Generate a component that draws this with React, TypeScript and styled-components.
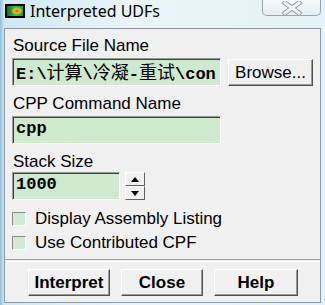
import React from "react";
import styled, { createGlobalStyle } from "styled-components";

const Global = createGlobalStyle`
  html, body { margin: 0; padding: 0; background: #e2f1f6; }
  body { font-family: "Liberation Sans", Arial, sans-serif; }
`;

const Window = styled.div`
  width: 325px;
  height: 305px;
  overflow: hidden;
  display: flex;
  flex-direction: column;
  background: linear-gradient(90deg, #8fbfd6 0px, #cfe8f2 4px, #e8f5f9 40%, #e4f3f7 100%);
`;

const TitleBar = styled.div`
  height: 28px;
  display: flex;
  align-items: flex-start;
  padding-left: 5px;
`;

const AppIcon = styled.svg`
  margin-top: 4px;
  flex: none;
`;

const Title = styled.div`
  margin-left: 5px;
  font-family: "Noto Sans", "Open Sans", sans-serif;
  font-size: 16px;
  line-height: 22px;
  color: #000;
`;

const CloseBox = styled.div`
  margin-left: auto;
  margin-right: 4px;
  width: 59px;
  height: 16px;
  box-sizing: border-box;
  border: 1px solid #95a5b2;
  border-top: none;
  border-radius: 0 0 5px 5px;
  background: linear-gradient(#f4fafc, #e3eef3);
  display: flex;
  align-items: center;
  justify-content: center;
`;

const Client = styled.div`
  margin-left: 4px;
  width: 317px;
  box-sizing: border-box;
  border: 1px solid #8c98a2;
  background: #f0f0f0;
  display: flex;
  flex-direction: column;
`;

const Form = styled.div`
  display: flex;
  flex-direction: column;
  padding: 7px 0 0 7px;
`;

const Label = styled.div<{ $mt?: number; $mb?: number }>`
  margin: ${(p) => p.$mt ?? 0}px 0 ${(p) => p.$mb ?? 3}px 1px;
  font-size: 17px;
  line-height: 19px;
  color: #000;
  white-space: nowrap;
`;

const Row = styled.div`
  display: flex;
  align-items: flex-start;
  height: 28px;
`;

const Field = styled.div<{ $w: number }>`
  width: ${(p) => p.$w}px;
  height: 28px;
  box-sizing: border-box;
  background: #cfe9cf;
  border-top: 1px solid #9a9a9a;
  border-left: 1px solid #9a9a9a;
  border-bottom: 1px solid #ffffff;
  border-right: 1px solid #ffffff;
  box-shadow: inset 1px 1px 0 #404040;
  padding: 0 0 0 3px;
  overflow: hidden;
  white-space: nowrap;
  font-family: "Liberation Mono", "Noto Sans CJK SC", monospace;
  font-weight: bold;
  font-size: 17px;
  line-height: 24px;
  color: #000;
`;

const Clip = styled.span`
  display: block;
  width: 100%;
  overflow: hidden;
`;

const Cjk = styled.span`
  font-family: "Noto Sans CJK SC", sans-serif;
  font-weight: normal;
  font-size: 18px;
`;

const Button = styled.button<{ $w: number; $bold?: boolean }>`
  width: ${(p) => p.$w}px;
  height: 27px;
  box-sizing: border-box;
  background: #f0f0f0;
  border-top: 1px solid #ffffff;
  border-left: 1px solid #ffffff;
  border-bottom: 1px solid #505050;
  border-right: 1px solid #505050;
  box-shadow: inset -1px -1px 0 #9a9a9a;
  padding: 0;
  font-family: "Liberation Sans", Arial, sans-serif;
  font-size: 17px;
  font-weight: ${(p) => (p.$bold ? "bold" : "normal")};
  color: #000;
  line-height: 24px;
`;

const BrowseButton = styled(Button)`
  margin-left: 7px;
  margin-top: 1px;
`;

const Spin = styled.div`
  margin-left: 5px;
  display: flex;
  flex-direction: column;
`;

const SpinButton = styled.div`
  width: 20px;
  height: 14px;
  box-sizing: border-box;
  background: #f0f0f0;
  border-top: 1px solid #ffffff;
  border-left: 1px solid #ffffff;
  border-bottom: 1px solid #606060;
  border-right: 1px solid #606060;
  display: flex;
  align-items: center;
  justify-content: center;
`;

const Checks = styled.div`
  display: flex;
  flex-direction: column;
  gap: 5px;
  margin-top: 9px;
`;

const CheckRow = styled.label`
  display: flex;
  align-items: center;
  height: 19px;
  font-size: 17px;
  line-height: 19px;
  color: #000;
  white-space: nowrap;
`;

const Box = styled.span`
  width: 14px;
  height: 14px;
  box-sizing: border-box;
  background: #d2ead2;
  border-top: 1px solid #8a8a8a;
  border-left: 1px solid #8a8a8a;
  border-bottom: 1px solid #ffffff;
  border-right: 1px solid #ffffff;
  margin-right: 9px;
`;

const Separator = styled.div`
  margin-top: 7px;
  height: 1px;
  border-top: 1px solid #a0a0a0;
  border-bottom: 1px solid #ffffff;
`;

const ButtonRow = styled.div`
  display: flex;
  gap: 11px;
  padding: 7px 0 6px 23px;
`;

const Tri = ({ up }: { up?: boolean }) => (
  <svg width="8" height="5" viewBox="0 0 8 5">
    <polygon points={up ? "0,5 8,5 4,0" : "0,0 8,0 4,5"} fill="#000" />
  </svg>
);

export default function App() {
  return (
    <>
      <Global />
      <Window>
        <TitleBar>
          <AppIcon width="20" height="14" viewBox="0 0 20 14">
            <defs>
              <linearGradient id="ig" x1="0" x2="1" y1="0" y2="0">
                <stop offset="0" stopColor="#0f6a3a" />
                <stop offset="0.5" stopColor="#38c040" />
                <stop offset="1" stopColor="#2a9a3a" />
              </linearGradient>
              <radialGradient id="hot" cx="0.5" cy="0.5" r="0.5">
                <stop offset="0" stopColor="#e03018" />
                <stop offset="0.45" stopColor="#f0c020" />
                <stop offset="1" stopColor="#f0e040" stopOpacity="0" />
              </radialGradient>
            </defs>
            <rect x="0" y="0" width="20" height="14" fill="#000" />
            <rect x="2" y="2" width="16" height="10" fill="url(#ig)" />
            <ellipse cx="12" cy="7" rx="6" ry="4" fill="url(#hot)" />
          </AppIcon>
          <Title>Interpreted UDFs</Title>
          <CloseBox>
            <svg width="24" height="14" viewBox="0 0 24 14">
              <g strokeLinecap="square">
                <path d="M5 2 L19 12 M19 2 L5 12" stroke="#8f9aa4" strokeWidth="5" />
                <path d="M5 2 L19 12 M19 2 L5 12" stroke="#f6f9fb" strokeWidth="3" />
              </g>
            </svg>
          </CloseBox>
        </TitleBar>
        <Client>
          <Form>
            <Label>Source File Name</Label>
            <Row>
              <Field $w={209}>
                <Clip>
                  E:\<Cjk>计算</Cjk>\<Cjk>冷凝</Cjk>-<Cjk>重试</Cjk>\con
                </Clip>
              </Field>
              <BrowseButton $w={85}>Browse...</BrowseButton>
            </Row>
            <Label $mt={8}>CPP Command Name</Label>
            <Row>
              <Field $w={209}>cpp</Field>
            </Row>
            <Label $mt={8} $mb={1}>Stack Size</Label>
            <Row>
              <Field $w={108}>1000</Field>
              <Spin>
                <SpinButton>
                  <Tri up />
                </SpinButton>
                <SpinButton>
                  <Tri />
                </SpinButton>
              </Spin>
            </Row>
            <Checks>
              <CheckRow>
                <Box />
                Display Assembly Listing
              </CheckRow>
              <CheckRow>
                <Box />
                Use Contributed CPF
              </CheckRow>
            </Checks>
          </Form>
          <Separator />
          <ButtonRow>
            <Button $w={82} $bold>Interpret</Button>
            <Button $w={82} $bold>Close</Button>
            <Button $w={84} $bold>Help</Button>
          </ButtonRow>
        </Client>
      </Window>
    </>
  );
}
